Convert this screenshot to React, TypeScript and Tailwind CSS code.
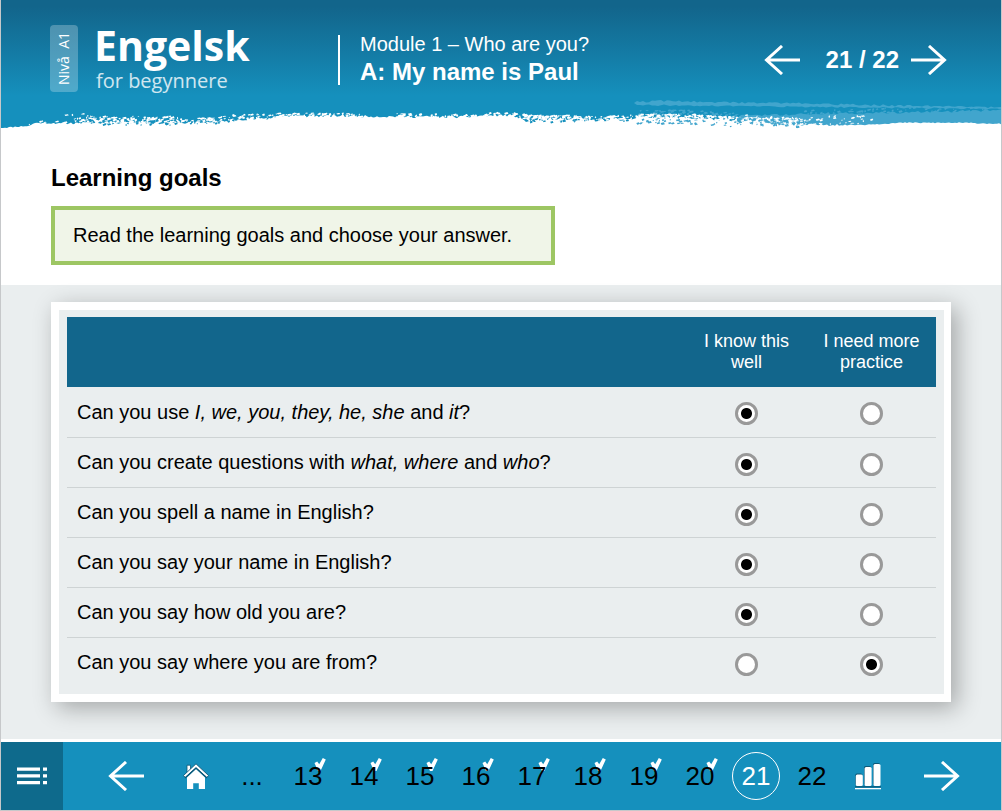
import type { ReactNode } from 'react'

function random(seed: number) {
  let s = seed
  return () => {
    s = (s * 1664525 + 1013904223) % 4294967296
    return s / 4294967296
  }
}

const EDGE: [number, number][] = [
  [0, 128], [14, 127], [29, 126], [33, 123], [70, 124], [120, 124], [180, 124], [226, 122],
  [232, 120], [268, 120], [275, 117], [340, 117], [460, 118], [500, 116], [515, 117], [525, 121],
  [600, 121], [628, 120], [638, 118], [690, 119], [720, 121], [760, 124], [800, 126], [860, 125],
  [900, 123], [960, 123], [1000, 124],
]

function edgeAt(x: number) {
  for (let i = 1; i < EDGE.length; i++) {
    if (x <= EDGE[i][0]) {
      const [x0, y0] = EDGE[i - 1]
      const [x1, y1] = EDGE[i]
      return y0 + ((y1 - y0) * (x - x0)) / (x1 - x0)
    }
  }
  return 124
}

function tornEdge() {
  const r = random(11)
  let d = 'M0 136V128'
  for (let x = 0; x <= 1000; x += 2) {
    const rough = x > 60 && x < 840 ? 2.6 : 1.2
    d += `L${x} ${(edgeAt(x) - r() * rough + 0.4).toFixed(1)}`
  }
  return d + 'V136Z'
}

function flecks(seed: number, count: number, x0: number, x1: number, top: number, bottom: number, bias: number) {
  const r = random(seed)
  let d = ''
  for (let i = 0; i < count; i++) {
    const x = x0 + r() * (x1 - x0)
    const y = edgeAt(x) + top + (1 - Math.pow(r(), bias)) * (bottom - top)
    const w = 0.8 + r() * 2.6
    const h = 0.6 + r() * 1.3
    d += `M${x.toFixed(1)} ${y.toFixed(1)}l${w.toFixed(1)} ${(-h / 2).toFixed(1)}l${(w / 3).toFixed(1)} ${h.toFixed(1)}l${(-w).toFixed(1)} ${(h / 2).toFixed(1)}z`
  }
  return d
}

function streak() {
  const r = random(5)
  let d = 'M633 103'
  for (let x = 636; x <= 1002; x += 3) {
    const t = (x - 636) / 364
    d += `L${x} ${(100.5 + t * 7 + (r() - 0.5) * 2 + (x < 650 ? 1 : 0)).toFixed(1)}`
  }
  for (let x = 1002; x >= 636; x -= 3) {
    const t = (x - 636) / 364
    d += `L${x} ${(105 + t * 4 + (r() - 0.5) * 1.4).toFixed(1)}`
  }
  return d + 'Z'
}

function wash() {
  const r = random(21)
  let d = 'M720 128L735 120'
  for (let x = 740; x <= 1003; x += 3) {
    const t = (x - 740) / 260
    d += `L${x} ${(115.5 - t * 5 + (r() - 0.5) * 2.5).toFixed(1)}`
  }
  return d + 'V128Z'
}

function BrushEdge() {
  return (
    <svg
      className="pointer-events-none absolute inset-x-0 top-0 h-[136px] w-full"
      viewBox="0 0 1000 136"
      preserveAspectRatio="none"
      aria-hidden="true"
    >
      <path d={streak()} fill="#41a5cd" />
      <path d={wash()} fill="#41a5cd" />
      <path d={flecks(31, 110, 638, 780, -9, -3, 1)} fill="#41a5cd" />
      <path d={flecks(37, 60, 800, 1000, -16, -11, 1)} fill="#41a5cd" />
      <path d={tornEdge()} fill="#fff" />
      <path d={flecks(2, 5, 63, 95, -11, -8, 1)} fill="#fff" />
      <path d={flecks(4, 8, 25, 80, -3, 0, 1)} fill="#fff" />
      <path d={flecks(3, 190, 72, 180, -8, 0, 1.2)} fill="#fff" />
      <path d={flecks(6, 90, 175, 275, -6, 0, 1)} fill="#fff" />
      <path d={flecks(7, 75, 270, 360, -4, 0, 1)} fill="#fff" />
      <path d={flecks(8, 85, 390, 520, -4, 0, 1)} fill="#fff" />
      <path d={flecks(9, 150, 520, 575, -6, 0, 1)} fill="#fff" />
      <path d={flecks(10, 90, 570, 640, -5, 0, 1)} fill="#fff" />
      <path d={flecks(13, 190, 640, 760, -5, 0, 1)} fill="#fff" />
      <path d={flecks(15, 150, 740, 800, -8, 0, 1.4)} fill="#fff" />
      <path d={flecks(17, 40, 790, 870, -10, -1, 1)} fill="#fff" />
      <path d={flecks(23, 30, 515, 625, -2, 1, 1)} fill="#1590bd" />
      <path d={flecks(27, 45, 635, 740, 0, 5, 1)} fill="#41a5cd" />
      <path d={flecks(29, 60, 730, 800, -5, 1, 1)} fill="#41a5cd" />
      <path d={flecks(41, 35, 100, 235, -2, 1, 1)} fill="#1590bd" />
    </svg>
  )
}

function Arrow({ right = false }: { right?: boolean }) {
  return (
    <svg width="36" height="30" viewBox="0 0 36 30" fill="none" stroke="#fff" strokeWidth="3" aria-hidden="true">
      <path d={right ? 'M0 15H34M18 1L33.500 15L18 29' : 'M36 15H2M18 1L2.500 15L18 29'} />
    </svg>
  )
}

function MenuIcon() {
  return (
    <svg width="30" height="18" viewBox="0 0 30 18" fill="#fff" aria-hidden="true">
      <path d="M0 0.500h23v3.200H0zM26 0.500h4v3.200h-4zM0 7.300h23v3.200H0zM26 7.300h4v3.200h-4zM0 14.100h23v3.200H0zM26 14.100h4v3.200h-4z" />
    </svg>
  )
}

function HomeIcon() {
  return (
    <svg width="26" height="27" viewBox="0 0 26 27" aria-hidden="true">
      <path d="M4 9.500V2.200H7.500V7" fill="#fff" stroke="#0e5877" strokeWidth="0.800" />
      <path d="M13 6L4 14.500V26H10.200V20.200h5.600V26H22V14.500z" fill="#fff" />
      <path d="M0.500 12.500L13 0.800L25.500 12.500L23.800 14.500L13 4.800L2.200 14.500z" fill="#fff" stroke="#0e5877" strokeWidth="0.900" />
      <path d="M2 15L13 5L24 15" fill="none" stroke="#0e5877" strokeWidth="1.200" />
    </svg>
  )
}

function ChartIcon() {
  return (
    <svg width="26" height="27" viewBox="0 0 26 27" aria-hidden="true">
      <g fill="#0e5877">
        <rect x="0.300" y="10.500" width="7" height="12" rx="1.500" />
        <rect x="9" y="3" width="7" height="19" rx="1.500" />
        <rect x="18" y="0" width="7" height="22" rx="1.500" />
        <rect x="0" y="23.200" width="26" height="1.200" />
      </g>
      <g fill="#fff">
        <rect x="0.800" y="11.500" width="7" height="11.500" rx="1.500" />
        <rect x="9.600" y="4" width="7" height="19" rx="1.500" />
        <rect x="18.500" y="1" width="7" height="22" rx="1.500" />
        <rect x="0" y="25" width="26" height="1.300" />
      </g>
    </svg>
  )
}

function Check() {
  return (
    <svg className="absolute -top-[3px] right-[10px]" width="12" height="13" viewBox="0 0 12 13" aria-hidden="true">
      <path d="M0.500 5L3.200 3.500L5.200 6.300L8.800 0L11.800 1.500L6.500 13H4z" fill="#fff" />
    </svg>
  )
}

const goals: { text: ReactNode; known: boolean }[] = [
  { text: <>Can you use <i>I, we, you, they, he, she</i> and <i>it</i>?</>, known: true },
  { text: <>Can you create questions with <i>what, where</i> and <i>who</i>?</>, known: true },
  { text: 'Can you spell a name in English?', known: true },
  { text: 'Can you say your name in English?', known: true },
  { text: 'Can you say how old you are?', known: true },
  { text: 'Can you say where you are from?', known: false },
]

const radio =
  'block mx-auto mt-1 size-[23px] appearance-none rounded-full border-[3px] border-[#999] bg-white checked:bg-[radial-gradient(circle,#000_5px,#fff_6px)]'

export default function App() {
  return (
    <div className="flex min-h-screen flex-col border-x border-b border-[#c6c8ca] bg-white font-['Liberation_Sans',Arial,sans-serif] text-xl text-black">
      <header className="relative flex h-[128px] items-start bg-linear-to-b from-[#12658b] from-5% to-[#1590bd] to-75% pr-[54px] pl-[49px] text-white">
        <BrushEdge />
        <div className="relative mt-[25px] flex h-[67px] w-7 items-center justify-center rounded-sm bg-white/25">
          <span className="rotate-180 font-['Open_Sans',sans-serif] text-sm leading-7 font-medium whitespace-pre [writing-mode:vertical-rl]">
            {'Nivå  A1'}
          </span>
        </div>
        <div className="relative mt-5 ml-4 w-[244px] font-['Open_Sans',sans-serif]">
          <div className="text-[41px] leading-[50px] font-bold">Engelsk</div>
          <div className="pl-[2px] text-xl leading-[22px] text-white/80">for begynnere</div>
        </div>
        <div className="relative mt-[35px] h-[50px] border-l-2 border-white pl-5">
          <div className="-mt-[2px] leading-[22px]">Module 1 – Who are you?</div>
          <h1 className="text-2xl leading-[34px] font-bold">A: My name is Paul</h1>
        </div>
        <div className="relative mt-[45px] ml-auto flex h-[30px] items-center">
          <button type="button" aria-label="Previous page"><Arrow /></button>
          <span className="mr-3 ml-[26px] text-2xl leading-[30px] font-bold">21 / 22</span>
          <button type="button" aria-label="Next page"><Arrow right /></button>
        </div>
      </header>

      <section className="px-[50px] pt-9 pb-5">
        <h2 className="text-2xl leading-7 font-bold">Learning goals</h2>
        <p className="mt-[14px] max-w-[504px] border-4 border-[#9dc663] bg-[#f0f5e8] px-[18px] py-3 leading-[27px]">
          Read the learning goals and choose your answer.
        </p>
      </section>

      <main className="grow bg-[#eaeeef] px-[50px] pt-[17px] pb-9">
        <div className="border-8 border-r-[7px] border-white bg-[#eaeeef] px-2 py-[7px] shadow-[6px_6px_22px_rgba(0,0,0,0.3)]">
          <table className="w-full table-fixed border-collapse">
            <colgroup>
              <col />
              <col className="w-[121px]" />
              <col className="w-[129px]" />
            </colgroup>
            <thead>
              <tr className="h-[70px] bg-[#12668c] text-lg leading-[21px] text-white">
                <td />
                <th scope="col" id="know" className="px-4 font-normal">I know this well</th>
                <th scope="col" id="practice" className="px-3 font-normal">I need more practice</th>
              </tr>
            </thead>
            <tbody>
              {goals.map((goal, i) => (
                <tr key={i} className="h-[50px] border-b border-[#ced3d4] last:border-b-0">
                  <th scope="row" id={`goal-${i}`} className="px-[10px] text-left leading-6 font-normal">{goal.text}</th>
                  <td>
                    <input type="radio" name={`goal-${i}`} aria-labelledby={`goal-${i} know`} defaultChecked={goal.known} className={radio} />
                  </td>
                  <td>
                    <input type="radio" name={`goal-${i}`} aria-labelledby={`goal-${i} practice`} defaultChecked={!goal.known} className={radio} />
                  </td>
                </tr>
              ))}
            </tbody>
          </table>
        </div>
      </main>

      <footer className="flex h-[71px] border-t-[3px] border-white bg-[#1590bd]">
        <button type="button" aria-label="Contents" className="flex w-[62px] items-center justify-center bg-[#0e6a8c]">
          <MenuIcon />
        </button>
        <nav className="flex grow items-center justify-center text-[26px] leading-[30px]">
          <button type="button" aria-label="Previous" className="flex w-[90px] justify-end pr-6"><Arrow /></button>
          <a href="#home" aria-label="Home" className="flex w-14 justify-center"><HomeIcon /></a>
          <span className="w-14 text-center">...</span>
          {[13, 14, 15, 16, 17, 18, 19, 20].map((n) => (
            <a key={n} href={`#${n}`} className="relative w-14 text-center">
              <Check />
              <span className="relative">{n}</span>
            </a>
          ))}
          <a href="#21" aria-current="page" className="mx-1 flex size-12 items-center justify-center rounded-full border border-white text-white">21</a>
          <a href="#22" className="w-14 text-center">22</a>
          <a href="#results" aria-label="Results" className="flex w-14 justify-center"><ChartIcon /></a>
          <button type="button" aria-label="Next" className="flex w-[90px] pl-7"><Arrow right /></button>
        </nav>
      </footer>
    </div>
  )
}
